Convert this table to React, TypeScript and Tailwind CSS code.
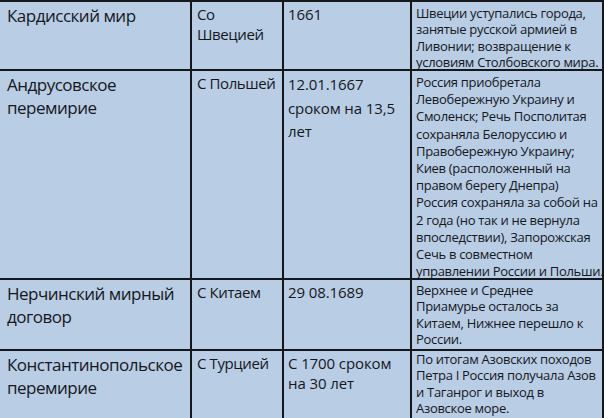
const rows = [
  {
    name: ["Кардисский мир"],
    side: ["Со", "Швецией"],
    date: ["1661"],
    dateLead: "leading-[20px]",
    terms: ["Швеции уступались города,", "занятые русской армией в", "Ливонии; возвращение к", "условиям Столбовского мира."],
    termsLead: "leading-[16.3px] pt-[3px]",
  },
  {
    name: ["Андрусовское", "перемирие"],
    side: ["С Польшей"],
    date: ["12.01.1667", "сроком на 13,5", "лет"],
    dateLead: "leading-[23.5px]",
    terms: [
      "Россия приобретала",
      "Левобережную Украину и",
      "Смоленск; Речь Посполитая",
      "сохраняла Белоруссию и",
      "Правобережную Украину;",
      "Киев (расположенный на",
      "правом берегу Днепра)",
      "Россия сохраняла за собой на",
      "2 года (но так и не вернула",
      "впоследствии), Запорожская",
      "Сечь в совместном",
      "управлении России и Польши.",
    ],
    termsLead: "leading-[17.2px] pt-[3px]",
  },
  {
    name: ["Нерчинский мирный", "договор"],
    side: ["С Китаем"],
    date: ["29 08.1689"],
    dateLead: "leading-[20px]",
    terms: ["Верхнее и Среднее", "Приамурье осталось за", "Китаем, Нижнее перешло к", "России."],
    termsLead: "leading-[16.3px] pt-[2px]",
  },
  {
    name: ["Константинопольское", "перемирие"],
    side: ["С Турцией"],
    date: ["С 1700 сроком", "на 30 лет"],
    dateLead: "leading-[20px]",
    terms: ["По итогам Азовских походов", "Петра I Россия получала Азов", "и Таганрог и выход в", "Азовское море."],
    termsLead: "leading-[16.3px] pt-0",
  },
];

function Lines({ lines }: { lines: string[] }) {
  return (
    <>
      {lines.map((l, i) => (
        <div key={i} className="whitespace-nowrap">{l}</div>
      ))}
    </>
  );
}

export default function App() {
  return (
    <div
      className="w-[604px] h-[418px] overflow-hidden bg-[#14171c] pt-[2px] pr-[2px] text-[#15181d]"
      style={{ fontFamily: '"Open Sans", "Noto Sans", sans-serif' }}
    >
      <div className="grid grid-cols-[190px_90px_126px_190px] grid-rows-[67px_207px_69px_67px] gap-[2px]">
        {rows.map((r, i) => (
          <div key={i} className="contents">
            <div className="bg-[#b9cde5] pl-[7px] pt-[2px] text-[17px] leading-[23px] tracking-[-0.5px]">
              <Lines lines={r.name} />
            </div>
            <div className="bg-[#b9cde5] pl-[5px] pt-[2px] text-[15px] leading-[20px] tracking-[-0.4px]">
              <Lines lines={r.side} />
            </div>
            <div className="bg-[#b9cde5] pl-[4px] pt-[2px] text-[15px] tracking-[-0.1px]">
              <div className={r.dateLead}>
                <Lines lines={r.date} />
              </div>
            </div>
            <div className="bg-[#b9cde5] pl-[4px] text-[13px] tracking-[-0.3px]">
              <div className={r.termsLead}>
                <Lines lines={r.terms} />
              </div>
            </div>
          </div>
        ))}
      </div>
    </div>
  );
}
